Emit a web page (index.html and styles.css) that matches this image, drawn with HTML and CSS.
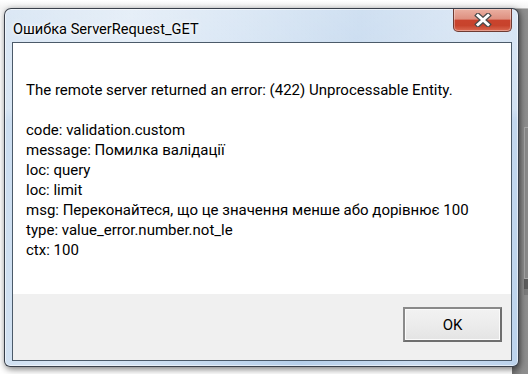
FILE: index.html
```html
<!DOCTYPE html>
<html lang="ru">
<head>
    <meta charset="UTF-8" />
    <title>Ошибка ServerRequest_GET</title>
    <link rel="stylesheet" href="styles.css">
</head>
<body>
    <div class="desktop">
        <!-- window in the background, peeking out on the right -->
        <div class="backwin"><div class="backwin-inner"></div></div>

        <div class="dialog">
            <div class="titlebar">
                <span class="title">Ошибка ServerRequest_GET</span>
                <button class="close" title="Close">
                    <svg width="18" height="14" viewBox="0 0 18 14">
                        <path d="M4 2.5 L14 11.5 M14 2.5 L4 11.5" stroke="#4b4b4b" stroke-width="5.4" stroke-linecap="square" fill="none"/>
                        <path d="M4 2.5 L14 11.5 M14 2.5 L4 11.5" stroke="#ffffff" stroke-width="3" stroke-linecap="square" fill="none"/>
                    </svg>
                </button>
            </div>
            <div class="client">
                <div class="message">
                    <p>The remote server returned an error: (422) Unprocessable Entity.</p>
                    <p>code: validation.custom<br>
                    message: Помилка валідації<br>
                    loc: query<br>
                    loc: limit<br>
                    msg: Переконайтеся, що це значення менше або дорівнює 100<br>
                    type: value_error.number.not_le<br>
                    ctx: 100</p>
                </div>
                <div class="footer">
                    <button class="ok">OK</button>
                </div>
            </div>
        </div>
    </div>
</body>
</html>
```
FILE: styles.css
```css
/* Basic reset */
* {
    margin: 0;
    padding: 0;
    box-sizing: border-box;
}

body {
    font-family: Roboto, "Noto Sans", sans-serif;
    background: #ffffff;
    width: 528px;
    height: 374px;
    overflow: hidden;
}

.desktop {
    position: relative;
    width: 528px;
    height: 374px;
    padding: 8px 0 0 4px;
    background: linear-gradient(to bottom, #ffffff 0, #f4f4f4 8px, #ffffff 20px);
}

/* Other window behind the dialog */
.backwin {
    position: absolute;
    left: 512px;
    top: 8px;
    width: 40px;
    height: 380px;
    background: linear-gradient(to right, #6f6f6f 0, #8e8e8e 10px, #909090 100%);
    border-top: 1px solid #bdbdbd;
}

.backwin-inner {
    margin: 118px 0 0 12px;
    height: 152px;
    border: 1px solid #a9a9a9;
    border-right: none;
    background: #8a8a8a;
    box-shadow: 0 10px 0 #5d5d5d, 0 16px 0 #7c7c7c;
}

/* Dialog frame (Aero look) */
.dialog {
    position: relative;
    width: 515px;
    height: 359px;
    display: flex;
    flex-direction: column;
    padding: 0 6px 5px 7px;
    border: 1px solid rgba(30, 35, 45, 0.85);
    border-radius: 7px 7px 6px 6px;
    background:
        linear-gradient(to bottom, rgba(255, 255, 255, 0.35) 0, rgba(255, 255, 255, 0.25) 100px, rgba(255, 255, 255, 0) 112px),
        linear-gradient(100deg, #c8dbef 0%, #d9e6f4 22%, #c9dcf0 42%, #b6cfea 62%, #cadcf0 82%, #bcd3ec 100%);
    box-shadow: inset 0 0 0 1px rgba(255, 255, 255, 0.55), 1px 2px 7px rgba(0, 0, 0, 0.55);
}

.titlebar {
    height: 33px;
    display: flex;
    align-items: flex-start;
    justify-content: space-between;
}

.title {
    font-size: 14.6px;
    line-height: 17px;
    margin: 12px 0 0 1px;
    color: #000;
    text-shadow: 0 0 6px #ffffff, 0 0 3px #ffffff;
}

.close {
    width: 59px;
    height: 23px;
    display: flex;
    align-items: center;
    justify-content: center;
    border: 1px solid #6e3b33;
    border-top: none;
    border-radius: 0 0 5px 5px;
    background: linear-gradient(to bottom, #eab0a2 0%, #de9080 45%, #c9432d 52%, #c7432c 75%, #db6a52 100%);
    box-shadow: inset 0 0 0 1px rgba(255, 255, 255, 0.35);
}

.close svg {
    display: block;
    margin-top: -1px;
}

/* Client area */
.client {
    flex: 1;
    display: flex;
    flex-direction: column;
    border: 1px solid #4b5a69;
    background: #ffffff;
}

.message {
    height: 251px;
    padding: 37px 10px 0 13px;
    font-size: 15px;
    line-height: 20px;
    color: #000;
}

.message p {
    margin-bottom: 20px;
}

.footer {
    flex: 1;
    display: flex;
    justify-content: flex-end;
    align-items: flex-start;
    padding: 13px 9px 0 0;
    background: #f0f0f0;
}

.ok {
    width: 99px;
    height: 35px;
    font-family: Roboto, sans-serif;
    font-size: 15px;
    color: #000;
    border: 2px solid #6f6f6f;
    border-top-color: #8a8a8a;
    border-left-color: #8a8a8a;
    background: linear-gradient(to bottom, #f2f2f2 0%, #ececec 50%, #e4e4e4 100%);
    box-shadow: inset 0 0 0 1px #fbfbfb;
}
```
